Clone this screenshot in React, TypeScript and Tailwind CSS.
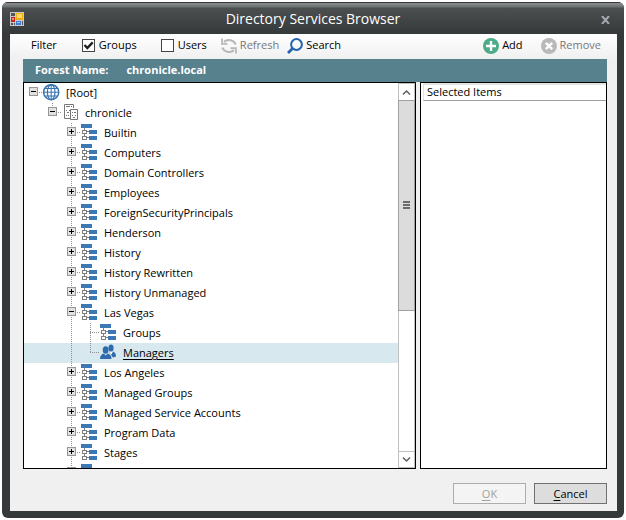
import { useState, type ReactNode } from "react";

type NodeKind = "root" | "domain" | "unit" | "group";
type Guide = "none" | "line" | "tee" | "corner" | "stub";

interface TreeRow {
  label: string;
  kind: NodeKind;
  guides: Guide[];
  open?: boolean;
}

const unit = (label: string, open = false): TreeRow => ({
  label,
  kind: "unit",
  guides: ["none", "none", "tee"],
  open,
});

const rows: TreeRow[] = [
  { label: "[Root]", kind: "root", guides: ["stub"], open: true },
  { label: "chronicle", kind: "domain", guides: ["none", "corner"], open: true },
  unit("Builtin"),
  unit("Computers"),
  unit("Domain Controllers"),
  unit("Employees"),
  unit("ForeignSecurityPrincipals"),
  unit("Henderson"),
  unit("History"),
  unit("History Rewritten"),
  unit("History Unmanaged"),
  unit("Las Vegas", true),
  { label: "Groups", kind: "unit", guides: ["none", "none", "line", "tee"] },
  { label: "Managers", kind: "group", guides: ["none", "none", "line", "corner"] },
  unit("Los Angeles"),
  unit("Managed Groups"),
  unit("Managed Service Accounts"),
  unit("Program Data"),
  unit("Stages"),
  unit(""),
];

function GuideLines({ type }: { type: Guide }) {
  const vertical = type === "line" || type === "tee" ? "M9.5 0V20" : type === "corner" ? "M9.5 0V10" : "";
  const horizontal = type === "tee" || type === "corner" || type === "stub" ? "M9 9.5H19" : "";
  return (
    <svg width="19" height="20" className="col-start-1 row-start-1" aria-hidden="true">
      <path d={`${vertical}${horizontal}`} stroke="#909090" strokeDasharray="1 1" fill="none" />
    </svg>
  );
}

function Expander({ open, label }: { open: boolean; label: string }) {
  return (
    <button
      type="button"
      aria-label={`${open ? "Collapse" : "Expand"} ${label}`}
      className="col-start-1 row-start-1 mt-1 size-[9px] self-start justify-self-center border border-[#969696] bg-[#e1e1e1]"
    >
      <svg width="7" height="7" className="block" shapeRendering="crispEdges" aria-hidden="true">
        <path d={open ? "M1 3.5H6" : "M1 3.5H6M3.5 1V6"} stroke="#000" />
      </svg>
    </button>
  );
}

function NodeIcon({ kind }: { kind: NodeKind }) {
  if (kind === "root")
    return (
      <svg width="17" height="18" viewBox="0 0 17 18" fill="none" stroke="#3572b0" aria-hidden="true">
        <circle cx="8.2" cy="8.2" r="7.5" strokeWidth="1.5" />
        <ellipse cx="8.2" cy="8.2" rx="3.8" ry="7.5" strokeWidth="1.2" />
        <path d="M8.2 1V16M1 8.2H16M2.2 4.5H14.2M2.2 12H14.2" />
      </svg>
    );
  if (kind === "domain")
    return (
      <svg width="17" height="18" viewBox="0 0 17 18" fill="none" stroke="#777" aria-hidden="true">
        <path d="M8 14.5H2.5V0.5H11.5V4M4 2.5H8M9 2.5H10M4 6.5H5M7 6.5H8M5 8.5H7M4 11.5H5M6 11.5H7" />
        <path d="M8.5 5.5H15.5V15.5H8.5ZM10 8.5H11M12 8.5H14M10 11.5H11M13 11.5H14M11 13.5H13" />
      </svg>
    );
  if (kind === "group")
    return (
      <svg width="17" height="18" viewBox="0 0 17 18" fill="#2f6bac" aria-hidden="true">
        <ellipse cx="11" cy="4" rx="2.6" ry="3.6" />
        <path d="M9.5 7L11.2 10.5 13 7.5Q16 8.5 16 12.5L13 13.5 9.5 9Z" />
        <path d="M9.5 8L11 11 12.5 8" fill="#fff" />
        <ellipse cx="5.6" cy="6" rx="2.9" ry="3.8" />
        <path d="M3.8 9.5Q0 10.5 0 15H11.5Q11.5 10.5 7.6 9.5L5.8 11.5Z" />
      </svg>
    );
  return (
    <svg width="17" height="18" viewBox="0 0 17 18" shapeRendering="crispEdges" fill="none" aria-hidden="true">
      <path d="M0 0H11V4H0ZM8 6H16V10H8ZM8 12H16V16H8Z" fill="#3c78b4" />
      <path d="M3.5 4V6M3.5 9V12M6 7.5H8M6 13.5H8M1.5 6.5H5.5V9.5H1.5ZM1.5 12.5H5.5V15.5H1.5Z" stroke="#808080" />
    </svg>
  );
}

function Row({ row, selected, onSelect }: { row: TreeRow; selected: boolean; onSelect: () => void }) {
  const last = row.guides.length - 1;
  return (
    <li
      role="treeitem"
      aria-level={row.guides.length}
      aria-selected={selected}
      onClick={onSelect}
      className={`flex h-5 shrink-0 items-center ${selected ? "bg-[#d7e8ee]" : ""}`}
    >
      {row.guides.map((guide, i) => (
        <span key={i} className="grid h-5 w-[19px] shrink-0">
          <GuideLines type={guide} />
          {i === last && row.open !== undefined && <Expander open={row.open} label={row.label} />}
        </span>
      ))}
      <NodeIcon kind={row.kind} />
      <span className={`pl-1.5 leading-5 whitespace-nowrap ${selected ? "underline underline-offset-2" : ""}`}>
        {row.label}
      </span>
    </li>
  );
}

function ToolButton({ icon, children, disabled }: { icon: ReactNode; children: ReactNode; disabled?: boolean }) {
  return (
    <button type="button" disabled={disabled} className="flex items-center gap-[3px] disabled:text-[#777]">
      {icon}
      {children}
    </button>
  );
}

function FilterBox({ label, defaultChecked }: { label: string; defaultChecked?: boolean }) {
  return (
    <label className="flex items-center gap-1">
      <span className="grid size-[13px]">
        <input
          type="checkbox"
          defaultChecked={defaultChecked}
          className="peer col-start-1 row-start-1 size-[13px] appearance-none border border-[#444] bg-white"
        />
        <svg
          viewBox="0 0 13 13"
          className="pointer-events-none invisible col-start-1 row-start-1 size-[13px] peer-checked:visible"
          aria-hidden="true"
        >
          <path d="M2.5 6L5.3 9L10.7 3.3" fill="none" stroke="#222" strokeWidth="2.4" />
        </svg>
      </span>
      {label}
    </label>
  );
}

function Chevron({ up }: { up?: boolean }) {
  return (
    <svg width="9" height="7" viewBox="0 0 9 7" fill="none" aria-hidden="true">
      <path d={up ? "M1 5.5L4.5 2L8 5.5" : "M1 1.5L4.5 5L8 1.5"} stroke="#606060" strokeWidth="1.5" />
    </svg>
  );
}

function ScrollBar() {
  return (
    <div className="flex w-[17px] shrink-0 flex-col border-x border-[#c0c0c0] bg-white">
      <button type="button" aria-label="Scroll up" className="grid h-[17px] shrink-0 place-items-center border-t border-[#c0c0c0]">
        <Chevron up />
      </button>
      <div className="flex-1">
        <div className="-mx-px grid h-3/5 place-items-center border border-[#a0a0a0] bg-[#dcdcdc]">
          <svg width="7" height="8" aria-hidden="true">
            <path d="M0 0H7V2H0ZM0 3H7V5H0ZM0 6H7V8H0Z" fill="#6b6b6b" />
          </svg>
        </div>
      </div>
      <button type="button" aria-label="Scroll down" className="grid h-[17px] shrink-0 place-items-center border-y border-[#c0c0c0]">
        <Chevron />
      </button>
    </div>
  );
}

const refreshIcon = (
  <svg width="16" height="16" viewBox="0 0 16 16" fill="none" stroke="#b8b8b8" aria-hidden="true">
    <path d="M14.6 6.5A7 6.2 0 0 0 3 3.8M1.4 9.5A7 6.2 0 0 0 13 12.2" strokeWidth="2.2" />
    <path d="M1 0.5V5.8H6.5M15 15.5V10.2H9.5" strokeWidth="1.8" />
  </svg>
);

const searchIcon = (
  <svg width="16" height="16" viewBox="0 0 16 16" fill="none" stroke="#2464ac" aria-hidden="true">
    <circle cx="9.5" cy="6.5" r="5.4" strokeWidth="2" />
    <path d="M5.5 10.5L1 15" strokeWidth="2.8" />
  </svg>
);

const addIcon = (
  <svg width="16" height="16" viewBox="0 0 16 16" aria-hidden="true">
    <circle cx="8" cy="8" r="8" fill="#4dab87" />
    <path d="M8 3V13M3 8H13" stroke="#fff" strokeWidth="2.4" />
  </svg>
);

const removeIcon = (
  <svg width="16" height="16" viewBox="0 0 16 16" aria-hidden="true">
    <circle cx="8" cy="8" r="8" fill="#b9b9b9" />
    <path d="M4.8 4.8L11.2 11.2M11.2 4.8L4.8 11.2" stroke="#fff" strokeWidth="2.4" />
  </svg>
);

function AppIcon() {
  return (
    <svg width="14" height="14" viewBox="0 0 14 14" shapeRendering="crispEdges" aria-hidden="true">
      <path d="M0 0H14V14H0Z" fill="#c9c9c9" />
      <path d="M1 1H5V4H1ZM1 11H3V13H1ZM4 11H5V13H4ZM12 9H13V13H12Z" fill="#555" />
      <path d="M1 5H5V10H1Z" fill="#c5291c" />
      <path d="M2 6H4V8H2Z" fill="#ef8a7c" />
      <path d="M6 1H13V8H6Z" fill="#f0ac14" />
      <path d="M7 2H12V6H7Z" fill="#ffdc6a" />
      <path d="M6 9H11V13H6Z" fill="#3f7fdc" />
      <path d="M7 10H10V11H7Z" fill="#9cc4f8" />
    </svg>
  );
}

export default function App() {
  const [selected, setSelected] = useState("Managers");
  return (
    <div className="h-screen bg-white p-0.5 font-['Open_Sans','Noto_Sans',sans-serif] text-[11px] text-black">
      <main className="flex h-full flex-col overflow-hidden rounded-md bg-[#353939] pr-[7px] pb-[7px] pl-2">
        <header className="-mr-[7px] -ml-2 grid h-8 shrink-0 grid-cols-[1fr_auto_1fr] items-center border-t border-[#353939] bg-[linear-gradient(#8b8e8e,#6c7070_4px,#4b4f4f_5px,#353939)] px-2">
          <AppIcon />
          <h1 className="text-sm text-white">Directory Services Browser</h1>
          <button type="button" aria-label="Close" className="mt-0.5 mr-1.5 justify-self-end">
            <svg width="9" height="8" viewBox="0 0 9 8" aria-hidden="true">
              <path d="M1 0L8 8M8 0L1 8" stroke="#a3a9b0" strokeWidth="2" />
            </svg>
          </button>
        </header>

        <div className="flex min-h-0 flex-1 flex-col bg-[#f0f0f0]">
          <div className="flex h-[25px] shrink-0 items-center rounded-tr-sm bg-linear-to-b from-white to-[#f0f0f0] pr-4 pb-0.5 pl-[21px]">
            <span className="mr-[25px]">Filter</span>
            <div className="flex gap-6">
              <FilterBox label="Groups" defaultChecked />
              <FilterBox label="Users" />
            </div>
            <div className="ml-[14px] flex flex-1 gap-2">
              <ToolButton icon={refreshIcon} disabled>Refresh</ToolButton>
              <ToolButton icon={searchIcon}>Search</ToolButton>
            </div>
            <div className="flex gap-[18px]">
              <ToolButton icon={addIcon}>Add</ToolButton>
              <ToolButton icon={removeIcon} disabled>Remove</ToolButton>
            </div>
          </div>

          <div className="flex min-h-0 flex-1 flex-col pr-[10px] pl-[13px]">
            <div className="flex h-[23px] shrink-0 items-center gap-[18px] bg-[#58818e] pl-3 font-bold text-white">
              <span>Forest Name:</span>
              <span>chronicle.local</span>
            </div>

            <div className="grid min-h-0 flex-1 grid-cols-[393fr_187fr] gap-1">
              <section className="flex min-h-0 min-w-0 border border-black bg-white">
                <ul role="tree" aria-label="Directory" className="flex min-w-0 flex-1 flex-col overflow-hidden">
                  {rows.map((row) => (
                    <Row
                      key={row.label}
                      row={row}
                      selected={row.label === selected}
                      onSelect={() => setSelected(row.label)}
                    />
                  ))}
                </ul>
                <ScrollBar />
              </section>
              <section className="min-w-0 border border-black bg-white">
                <h2 className="ml-0.5 flex h-[18px] items-center border-t-2 border-b border-l border-t-[#e3e3e3] border-b-[#a0a0a0] border-l-[#e3e3e3] pl-[3px]">
                  Selected Items
                </h2>
              </section>
            </div>
          </div>

          <footer className="flex shrink-0 justify-end gap-2 pt-[14px] pr-[10px] pb-[7px]">
            <button type="button" disabled className="h-[21px] w-[73px] border border-[#adadad] bg-[#f4f4f4] leading-4 text-[#a0a0a0]">
              <u className="underline-offset-2">O</u>K
            </button>
            <button type="button" className="h-[21px] w-[73px] border border-[#707070] bg-[#dddddd] leading-4">
              <u className="underline-offset-2">C</u>ancel
            </button>
          </footer>
        </div>
      </main>
    </div>
  );
}
